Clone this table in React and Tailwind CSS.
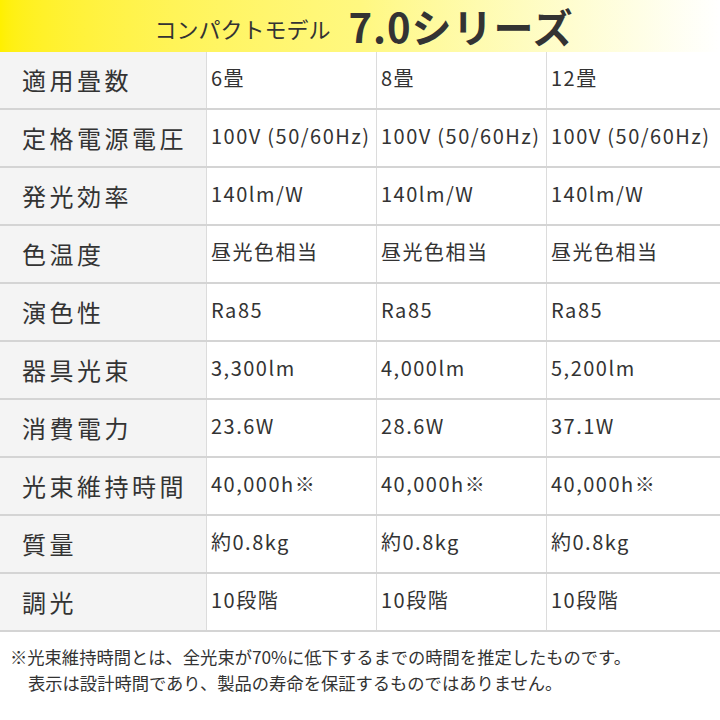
import React from 'react';

const rows = [
  ['適用畳数', '6畳', '8畳', '12畳'],
  ['定格電源電圧', '100V\u2009(50/60Hz)', '100V\u2009(50/60Hz)', '100V\u2009(50/60Hz)'],
  ['発光効率', '140lm/W', '140lm/W', '140lm/W'],
  ['色温度', '昼光色相当', '昼光色相当', '昼光色相当'],
  ['演色性', 'Ra85', 'Ra85', 'Ra85'],
  ['器具光束', '3,300lm', '4,000lm', '5,200lm'],
  ['消費電力', '23.6W', '28.6W', '37.1W'],
  ['光束維持時間', '40,000h※', '40,000h※', '40,000h※'],
  ['質量', '約0.8kg', '約0.8kg', '約0.8kg'],
  ['調光', '10段階', '10段階', '10段階'],
];

export default function App() {
  return (
    <div
      className="w-[720px] h-[720px] bg-white text-[#333] overflow-hidden"
      style={{ fontFamily: '"Noto Sans CJK JP", "Noto Sans", sans-serif' }}
    >
      {/* Header */}
      <div className="h-[52px] flex items-center justify-center gap-[18px] bg-gradient-to-r from-[#fff000] via-[#fff880] to-[#ffffff]">
        <span className="text-[22px] leading-[30px] text-[#333] pt-1 pl-2">コンパクトモデル</span>
        <span className="text-[40px] font-bold text-[#333] leading-[48px] tracking-[1px]">7.0シリーズ</span>
      </div>

      {/* Spec table */}
      <div>
        {rows.map((r, i) => (
          <div key={i} className="grid grid-cols-[207px_170px_170px_173px] h-[58px] border-b-2 border-[#d4d4d4]">
            <div className="bg-[#f4f4f4] flex items-center pl-[22px] text-[24px] tracking-[3.5px] border-r border-[#dcdcdc]">
              {r[0]}
            </div>
            {r.slice(1).map((v, j) => (
              <div
                key={j}
                className={`flex items-center pl-[4px] pb-1 text-[20px] tracking-[1.5px] whitespace-nowrap ${j < 2 ? 'border-r border-[#dcdcdc]' : ''}`}
              >
                {v}
              </div>
            ))}
          </div>
        ))}
      </div>

      {/* Note */}
      <div className="pt-[12px] pl-[28px] text-[17.3px] leading-[26px] text-[#333]">
        <p className="-indent-[18px]">※光束維持時間とは、全光束が70%に低下するまでの時間を推定したものです。</p>
        <p>表示は設計時間であり、製品の寿命を保証するものではありません。</p>
      </div>
    </div>
  );
}
